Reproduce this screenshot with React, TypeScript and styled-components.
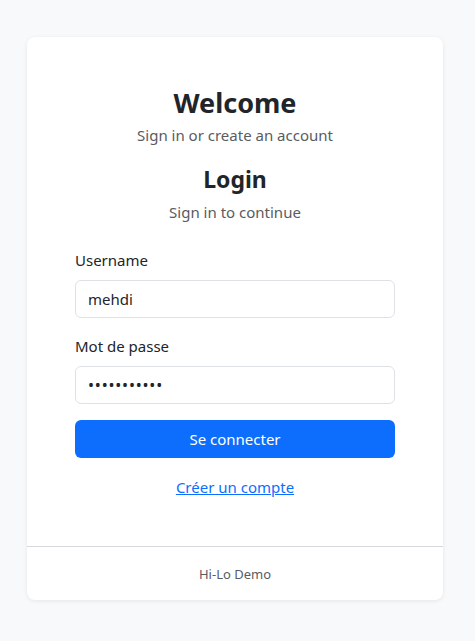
import React from "react";
import styled, { createGlobalStyle } from "styled-components";

const Global = createGlobalStyle`
  html, body { margin: 0; padding: 0; }
  body {
    background: #f8f9fa;
    font-family: "Noto Sans", "Open Sans", sans-serif;
    color: #212529;
    font-size: 16px;
  }
  * { box-sizing: border-box; }
`;

const Page = styled.div`
  padding: 37px 32px 41px 27px;
  display: flex;
  justify-content: center;
`;

const Card = styled.div`
  width: 416px;
  background: #fff;
  border-radius: 8px;
  box-shadow: 0 1px 4px rgba(0, 0, 0, 0.08);
  display: flex;
  flex-direction: column;
`;

const Body = styled.div`
  padding: 50px 48px 48px;
  display: flex;
  flex-direction: column;
`;

const Title = styled.h3<{ $size: number }>`
  margin: 0;
  text-align: center;
  font-weight: 700;
  font-size: ${(p) => p.$size}px;
  line-height: 1.2;
`;

const Sub = styled.p`
  margin: 0;
  text-align: center;
  color: #595c5f;
  font-size: 15px;
  line-height: 1.5;
`;

const Header = styled.div<{ $gap: number; $mb: number }>`
  display: flex;
  flex-direction: column;
  gap: ${(p) => p.$gap}px;
  margin-bottom: ${(p) => p.$mb}px;
`;

const Field = styled.div<{ $mb: number }>`
  display: flex;
  flex-direction: column;
  gap: 8.5px;
  margin-bottom: ${(p) => p.$mb}px;
`;

const Label = styled.label`
  font-size: 15px;
  line-height: 1.5;
`;

const Input = styled.input<{ $secret?: boolean }>`
  height: 38px;
  border: 1px solid #dee2e6;
  border-radius: 6px;
  padding: 6px 12px;
  font-family: inherit;
  font-size: ${(p) => (p.$secret ? 16 : 15)}px;
  letter-spacing: ${(p) => (p.$secret ? 0.8 : 0)}px;
  color: #212529;
  outline: none;
`;

const Button = styled.button`
  height: 38px;
  border: none;
  border-radius: 6px;
  background: #0d6efd;
  color: #fff;
  font-family: inherit;
  font-size: 15px;
`;

const LinkRow = styled.div`
  text-align: center;
  margin-top: 18px;
`;

const Link = styled.a`
  color: #0d6efd;
  font-size: 15px;
  text-decoration: underline;
`;

const Footer = styled.div`
  border-top: 1px solid #d6d8db;
  height: 54px;
  display: flex;
  align-items: center;
  justify-content: center;
  color: #595c5f;
  font-size: 13px;
`;

export default function App() {
  return (
    <>
      <Global />
      <Page>
        <Card>
          <Body>
            <Header $gap={5} $mb={19}>
              <Title $size={27}>Welcome</Title>
              <Sub>Sign in or create an account</Sub>
            </Header>
            <Header $gap={8} $mb={25}>
              <Title $size={23}>Login</Title>
              <Sub>Sign in to continue</Sub>
            </Header>
            <Field $mb={17.5}>
              <Label>Username</Label>
              <Input defaultValue="mehdi" />
            </Field>
            <Field $mb={16}>
              <Label>Mot de passe</Label>
              <Input $secret type="password" defaultValue="password123" />
            </Field>
            <Button>Se connecter</Button>
            <LinkRow>
              <Link href="#">Créer un compte</Link>
            </LinkRow>
          </Body>
          <Footer>Hi-Lo Demo</Footer>
        </Card>
      </Page>
    </>
  );
}
